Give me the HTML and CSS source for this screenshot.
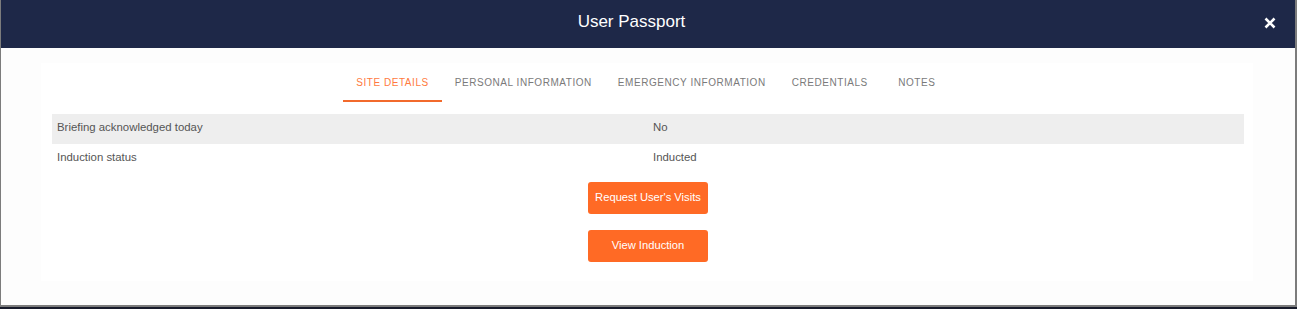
FILE: index.html
```html
<!DOCTYPE html>
<html lang="en">
<head>
    <meta charset="UTF-8">
    <meta name="viewport" content="width=device-width, initial-scale=1.0">
    <title>User Passport</title>
    <link rel="stylesheet" href="styles.css">
</head>
<body>
    <div class="modal">
        <div class="modal-header">
            <h1 class="modal-title">User Passport</h1>
            <button class="close" type="button" aria-label="Close">
                <svg width="12" height="12" viewBox="0 0 12 12">
                    <path d="M1.5 1.5 L10.5 10.5 M10.5 1.5 L1.5 10.5" stroke="#fff" stroke-width="2.6" fill="none"/>
                </svg>
            </button>
        </div>

        <div class="modal-body">
            <div class="panel">
                <ul class="tabs">
                    <li class="active"><a href="#">Site Details</a></li>
                    <li><a href="#">Personal Information</a></li>
                    <li><a href="#">Emergency Information</a></li>
                    <li><a href="#">Credentials</a></li>
                    <li><a href="#">Notes</a></li>
                </ul>

                <table class="details">
                    <tr class="striped">
                        <td>Briefing acknowledged today</td>
                        <td>No</td>
                    </tr>
                    <tr>
                        <td>Induction status</td>
                        <td>Inducted</td>
                    </tr>
                </table>

                <div class="actions">
                    <button class="btn" type="button">Request User's Visits</button>
                    <button class="btn" type="button">View Induction</button>
                </div>
            </div>
        </div>
    </div>
</body>
</html>
```

FILE: styles.css
```css
body {
    font-family: "Liberation Sans", Arial, sans-serif;
    margin: 0;
    padding: 0;
    background-color: #171b2b;
}

.modal {
    width: 1297px;
    height: 307px;
    box-sizing: border-box;
    background-color: #fdfdfd;
    border-left: 1px solid #7c7c7c;
    border-right: 2px solid #7c7c7c;
    border-bottom: 2px solid #7c7c7c;
    display: flex;
    flex-direction: column;
}

.modal-header {
    background-color: #1e2848;
    height: 48px;
    box-sizing: border-box;
    padding: 12px 19px 0 0;
    display: flex;
    align-items: flex-start;
}

.modal-title {
    flex: 1;
    margin: 0;
    text-align: center;
    color: #fff;
    font-size: 17px;
    font-weight: normal;
    line-height: 20px;
}

.close {
    background: none;
    border: none;
    padding: 0;
    margin-top: 5px;
    width: 14px;
    height: 12px;
    cursor: pointer;
    display: flex;
    justify-content: flex-end;
}

.modal-body {
    flex: 1;
    padding: 15px 42px 24px 40px;
}

.panel {
    background-color: #fff;
    height: 100%;
    box-sizing: border-box;
    padding: 0 9px 0 11px;
}

.tabs {
    list-style-type: none;
    margin: 0 0 12px 0;
    padding: 0;
    display: flex;
    justify-content: center;
}

.tabs li {
    min-width: 72px;
    box-sizing: border-box;
    text-align: center;
    border-bottom: 2px solid transparent;
    padding: 12px 13px 10px;
}

.tabs li a {
    display: block;
    text-decoration: none;
    text-transform: uppercase;
    font-size: 10px;
    line-height: 15px;
    letter-spacing: 0.55px;
    color: #7a7a7a;
}

.tabs li.active {
    border-bottom-color: #f26a2c;
}

.tabs li.active a {
    color: #ff7a40;
}

.details {
    width: 100%;
    border-collapse: collapse;
    table-layout: fixed;
}

.details td {
    padding: 4px 5px 8px;
    font-size: 11.4px;
    line-height: 18px;
    color: #555;
}

.details tr.striped {
    background-color: #eee;
}

.actions {
    padding-top: 8px;
    display: flex;
    flex-direction: column;
    align-items: center;
    gap: 16px;
}

.btn {
    width: 120px;
    height: 32px;
    padding: 0 0 3px;
    background-color: #ff6a25;
    color: #fff;
    border: none;
    border-radius: 3px;
    font-family: inherit;
    font-size: 11.2px;
    cursor: pointer;
}
```
